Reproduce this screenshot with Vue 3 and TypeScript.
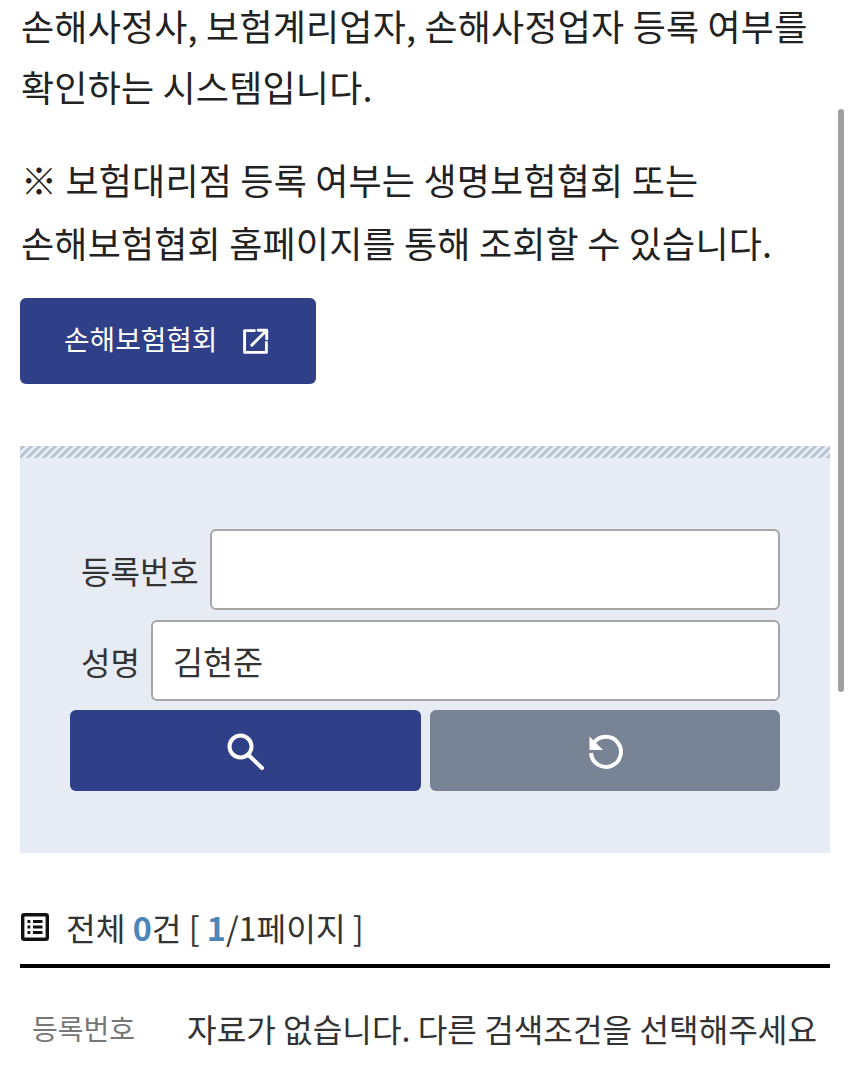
<script setup lang="ts">
const intro: string[] = [
  '손해사정사, 보험계리업자, 손해사정업자 등록 여부를',
  '확인하는 시스템입니다.',
]
const notice: string[] = [
  '※ 보험대리점 등록 여부는 생명보험협회 또는',
  '손해보험협회 홈페이지를 통해 조회할 수 있습니다.',
]
</script>

<template>
  <div class="page">
    <div class="scrollbar"></div>
    <p class="copy intro">
      <span v-for="line in intro" :key="line" class="line">{{ line }}</span>
    </p>
    <p class="copy notice">
      <span v-for="line in notice" :key="line" class="line">{{ line }}</span>
    </p>
    <a class="link-btn">
      <span class="link-text">손해보험협회</span>
      <svg class="ext" viewBox="0 0 26 26" fill="none" stroke="#fff" stroke-width="2.8" stroke-linecap="round" stroke-linejoin="round">
        <path d="M12 2.5H2.5v21h21V14" />
        <path d="M9.5 16.5 23.5 2.5M15.5 2.2h8.3v8.3" />
      </svg>
    </a>

    <section class="panel">
      <div class="stripes"></div>
      <div class="form">
        <div class="field">
          <label>등록번호</label>
          <div class="input"></div>
        </div>
        <div class="field">
          <label>성명</label>
          <div class="input">김현준</div>
        </div>
        <div class="actions">
          <button class="btn primary" aria-label="검색">
            <svg viewBox="0 0 38 38" width="38" height="38" fill="none" stroke="#fff" stroke-width="4">
              <circle cx="14.5" cy="14.5" r="11" />
              <path d="M22.5 23 36 36" stroke-linecap="round" />
            </svg>
          </button>
          <button class="btn secondary" aria-label="초기화">
            <svg viewBox="0 0 38 38" width="38" height="38" fill="none">
              <path d="M7.5 11.5A15 15 0 1 1 5 21" stroke="#fff" stroke-width="4" />
              <path d="M3.5 4.5v13.5h13.5z" fill="#fff" />
            </svg>
          </button>
        </div>
      </div>
    </section>

    <div class="summary">
      <svg class="list-icon" viewBox="0 0 28 28" fill="none" stroke="#111" stroke-width="3.4">
        <rect x="1.7" y="1.7" width="24.6" height="24.6" rx="1.5" />
        <path d="M6.5 8.5h2.8M12 8.5h9.5M6.5 14h2.8M12 14h9.5M6.5 19.5h2.8M12 19.5h9.5" stroke-width="2.8" />
      </svg>
      <span>전체 <b>0</b>건 [ <b>1</b>/1페이지 ]</span>
    </div>

    <div class="row">
      <span class="row-label">등록번호</span>
      <span class="row-value">자료가 없습니다. 다른 검색조건을 선택해주세요</span>
    </div>
  </div>
</template>

<style>
html,
body {
  margin: 0;
  background: #fff;
  overflow: hidden;
}
</style>

<style scoped>
.page {
  position: relative;
  box-sizing: border-box;
  height: 1075px;
  overflow: hidden;
  padding: 0 20px;
  background: #fff;
  color: #222;
  font-family: "Noto Sans CJK KR", "Noto Sans", sans-serif;
}
.scrollbar {
  position: absolute;
  left: 838px;
  top: 109px;
  width: 6px;
  height: 583px;
  border-radius: 3px;
  background: #a0a0a0;
}
.copy {
  margin: 0;
  padding-left: 1px;
  font-size: 36px;
  letter-spacing: 0.2px;
}
.line {
  display: block;
  white-space: nowrap;
}
.intro {
  line-height: 61px;
  margin-top: -5px;
}
.notice {
  margin-top: 31px;
  line-height: 63px;
}
.link-btn {
  display: flex;
  align-items: center;
  box-sizing: border-box;
  width: 296px;
  height: 86px;
  margin-top: 24px;
  padding-left: 44px;
  gap: 25px;
  border-radius: 6px;
  background: #2f4088;
  color: #fff;
  font-size: 27.8px;
}
.link-text {
  padding-bottom: 7px;
}
.ext {
  width: 27px;
  height: 27px;
}
.panel {
  margin-top: 62px;
  height: 407px;
  background: #e7ebf3;
}
.stripes {
  height: 12px;
  background: repeating-linear-gradient(-45deg, #b9c6d2 0 3px, #e7ebf3 3px 5.66px);
}
.form {
  display: flex;
  flex-direction: column;
  gap: 10px;
  padding: 71px 50px 0;
}
.field {
  display: flex;
  align-items: center;
  gap: 11px;
  padding-left: 11px;
}
.field label {
  font-size: 32px;
  color: #333;
  white-space: nowrap;
}
.input {
  flex: 1;
  box-sizing: border-box;
  height: 81px;
  padding-left: 20px;
  border: 2px solid #a6a6a6;
  border-radius: 6px;
  background: #fff;
  font-size: 32.7px;
  line-height: 77px;
  color: #333;
}
.actions {
  display: flex;
  gap: 9px;
  margin-top: -1px;
}
.btn {
  display: flex;
  flex: 1;
  align-items: center;
  justify-content: center;
  height: 81px;
  padding: 0;
  border: 0;
  border-radius: 6px;
}
.primary {
  background: #2f4088;
}
.secondary {
  background: #788395;
}
.summary {
  display: flex;
  align-items: center;
  gap: 17px;
  height: 115px;
  border-bottom: 4px solid #000;
  padding-left: 1px;
  box-sizing: border-box;
  font-size: 32.3px;
  color: #333;
  padding-top: 37px;
}
.summary b {
  color: #4a87b8;
  font-weight: 700;
}
.list-icon {
  width: 28px;
  height: 28px;
}
.row {
  display: flex;
  align-items: center;
  height: 120px;
  padding-left: 12px;
  gap: 52px;
}
.row-label {
  font-size: 28px;
  color: #777;
  white-space: nowrap;
}
.row-value {
  font-size: 32.2px;
  color: #333;
  white-space: nowrap;
}
</style>
